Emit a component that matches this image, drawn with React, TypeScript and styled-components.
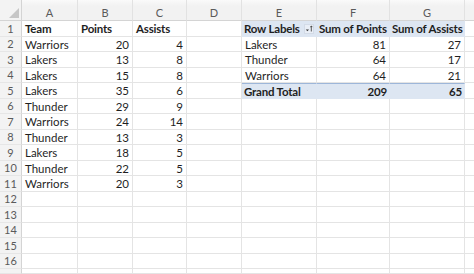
import React from 'react'
import styled, { createGlobalStyle } from 'styled-components'

const GlobalStyle = createGlobalStyle`
  html, body {
    margin: 0;
    padding: 0;
    background: #ffffff;
    overflow: hidden;
  }
  body {
    font-family: Lato, "Open Sans", sans-serif;
  }
`

const COLS = [22, 56, 55, 54, 55, 75, 73, 75, 30]
const LETTERS = ['A', 'B', 'C', 'D', 'E', 'F', 'G', '']
const ROW_COUNT = 16

const Sheet = styled.div`
  display: grid;
  grid-template-columns: ${COLS.map((w) => `${w}px`).join(' ')};
  grid-template-rows: 21px repeat(${ROW_COUNT}, 15.53px) 1fr;
  width: 474px;
  height: 274px;
  overflow: hidden;
  font-size: 11.5px;
  color: #1f1f1f;
`

const Corner = styled.div`
  background: #f3f3f3;
  border-right: 1px solid #d4d4d4;
  border-bottom: 1px solid #d4d4d4;
  position: relative;
  box-sizing: border-box;
`

const CornerTriangle = styled.svg`
  position: absolute;
  right: 2px;
  bottom: 2px;
`

const ColHead = styled.div`
  background: linear-gradient(#fafafa 0, #f2f2f2 6px, #f2f2f2 100%);
  border-bottom: 1px solid #d4d4d4;
  border-right: 1px solid #e2e2e2;
  box-sizing: border-box;
  display: flex;
  align-items: center;
  justify-content: center;
  padding-top: 5px;
  color: #5a5a5a;
  font-size: 11px;
`

const RowHead = styled.div`
  background: #f3f3f3;
  border-right: 1px solid #d4d4d4;
  border-bottom: 1px solid #e6e6e6;
  box-sizing: border-box;
  display: flex;
  align-items: center;
  justify-content: center;
  color: #5a5a5a;
  font-size: 11px;
`

const Cell = styled.div<{ $align?: 'left' | 'right'; $bold?: boolean; $band?: boolean; $topLine?: boolean }>`
  box-sizing: border-box;
  border-right: 1px solid ${({ $band }) => ($band ? 'transparent' : '#e4e4e4')};
  border-bottom: 1px solid ${({ $band }) => ($band ? 'transparent' : '#e4e4e4')};
  border-top: ${({ $topLine }) => ($topLine ? '1px solid #9db6d9' : 'none')};
  background: ${({ $band }) => ($band ? '#dde6f2' : '#ffffff')};
  display: flex;
  align-items: center;
  justify-content: ${({ $align }) => ($align === 'right' ? 'flex-end' : 'flex-start')};
  padding: 1px ${({ $band }) => ($band ? '2px' : '3px')} 0;
  font-weight: ${({ $bold }) => ($bold ? 700 : 400)};
  letter-spacing: ${({ $bold }) => ($bold ? '-0.2px' : '0')};
  white-space: nowrap;
  overflow: visible;
  color: #1f1f1f;
`

const FilterButton = styled.span`
  display: inline-flex;
  align-items: center;
  margin-left: 4px;
`

const FilterIcon = () => (
  <FilterButton>
    <svg width="10" height="10" viewBox="0 0 10 10">
      <rect x="0.5" y="0.5" width="9" height="9" fill="#e9eef6" stroke="#d3dbe7" />
      <path d="M1.8 5.4 L5 5.4 L3.4 7.3 Z" fill="#333" />
      <path d="M7.3 2 L7.3 7.5 M6.2 3.1 L7.3 2 L8.4 3.1" stroke="#333" strokeWidth="0.8" fill="none" />
    </svg>
  </FilterButton>
)

type Val = string | number | null

const data: Val[][] = [
  ['Team', 'Points', 'Assists'],
  ['Warriors', 20, 4],
  ['Lakers', 13, 8],
  ['Lakers', 15, 8],
  ['Lakers', 35, 6],
  ['Thunder', 29, 9],
  ['Warriors', 24, 14],
  ['Thunder', 13, 3],
  ['Lakers', 18, 5],
  ['Thunder', 22, 5],
  ['Warriors', 20, 3],
]

const pivot: Val[][] = [
  ['Row Labels', 'Sum of Points', 'Sum of Assists'],
  ['Lakers', 81, 27],
  ['Thunder', 64, 17],
  ['Warriors', 64, 21],
  ['Grand Total', 209, 65],
]

const App = () => {
  const rows = []
  for (let r = 0; r <= ROW_COUNT; r++) {
    const cells = []
    cells.push(<RowHead key="h">{r < ROW_COUNT ? r + 1 : ''}</RowHead>)
    for (let c = 0; c < 8; c++) {
      let content: React.ReactNode = null
      let align: 'left' | 'right' = 'left'
      let bold = false
      let band = false
      let topLine = false

      if (c < 3 && r < data.length) {
        const v = data[r][c]
        content = v
        bold = r === 0
        align = typeof v === 'number' ? 'right' : 'left'
      }
      if (c >= 4 && c <= 6 && r < pivot.length) {
        const v = pivot[r][c - 4]
        content = v
        align = typeof v === 'number' ? 'right' : 'left'
        bold = r === 0 || r === 4
        band = r === 0 || r === 4
        topLine = r === 4
        if (r === 0 && c === 4) {
          content = (
            <>
              {v}
              <FilterIcon />
            </>
          )
        }
      }

      cells.push(
        <Cell key={c} $align={align} $bold={bold} $band={band} $topLine={topLine}>
          {content}
        </Cell>
      )
    }
    rows.push(<React.Fragment key={r}>{cells}</React.Fragment>)
  }

  return (
    <>
      <GlobalStyle />
      <Sheet>
        <Corner>
          <CornerTriangle width="10" height="10" viewBox="0 0 10 10">
            <path d="M10 0 L10 10 L0 10 Z" fill="#c6c6c6" />
          </CornerTriangle>
        </Corner>
        {LETTERS.map((l, i) => (
          <ColHead key={i}>{l}</ColHead>
        ))}
        {rows}
      </Sheet>
    </>
  )
}

export default App
